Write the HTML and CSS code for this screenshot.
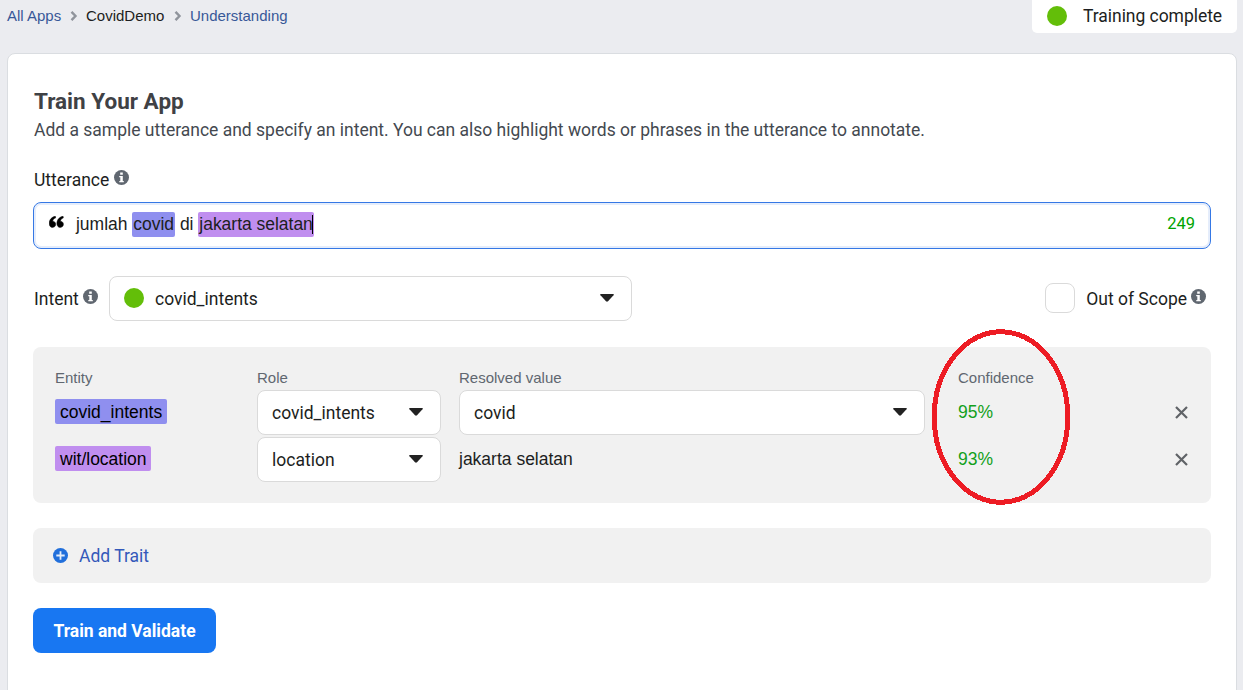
FILE: index.html
```html
<!DOCTYPE html>
<html lang="en">
<head>
<meta charset="utf-8">
<title>Understanding</title>
<link rel="stylesheet" href="styles.css">
</head>
<body>
<svg class="defs" width="0" height="0">
  <symbol id="info" viewBox="0 0 15 15"><circle cx="7.5" cy="7.5" r="7.5" fill="#606770"/><path d="M6.2 2.6h2.6v2.2H6.200zM5.200 6h3.600v5H9.800v1.200H5.300v-1.200h1V7.300H5.200z" fill="#fff"/></symbol>
  <symbol id="caret" viewBox="0 0 14 8"><path d="M.6 0h12.800q.8.5.1 1.300L8 7.300q-1 .9-2 0L.5 1.300Q-.2.5.6 0z" fill="#222"/></symbol>
  <symbol id="chevron" viewBox="0 0 8 10"><path d="M1.500 .8l4 4.200-4 4.200" fill="none" stroke="#90949c" stroke-width="2.400"/></symbol>
  <symbol id="close" viewBox="0 0 13 13"><path d="M1 1l11 11M12 1L1 12" fill="none" stroke="#606367" stroke-width="2.200"/></symbol>
</svg>
<header class="topbar">
  <nav class="crumbs">
    <a class="link c1">All Apps</a><svg class="chev"><use href="#chevron"/></svg><span class="c2">CovidDemo</span><svg class="chev"><use href="#chevron"/></svg><a class="link c3">Understanding</a>
  </nav>
  <div class="status"><i class="dot"></i><span class="status-text">Training complete</span></div>
</header>
<main class="card">
  <h1 class="title"><span>Train Your App</span></h1>
  <p class="intro"><span>Add a sample utterance and specify an intent. You can also highlight words or phrases in the utterance to annotate.</span></p>
  <div class="label utter-label"><span>Utterance</span><svg class="info"><use href="#info"/></svg></div>
  <div class="utterance">
    <svg class="quote" viewBox="0 0 15 12"><path d="M6.400.3C3 .8.200 3.500.200 7.500c0 2.400 1.300 3.900 3.300 3.900 1.900 0 3.200-1.300 3.200-3.100S5.400 5.200 3.700 5.200c0-1.600 1.100-2.700 2.900-3.300zM14.100.3C10.700.8 7.900 3.500 7.900 7.500c0 2.400 1.300 3.900 3.300 3.900 1.900 0 3.200-1.300 3.200-3.100s-1.300-3.100-3-3.100c0-1.600 1.100-2.700 2.900-3.300z" fill="#000" stroke="#000" stroke-width=".5"/></svg>
    <div class="sentence">jumlah <mark class="blue">covid</mark> di <mark class="purple">jakarta selatan<i class="cursor"></i></mark></div>
    <span class="count">249</span>
  </div>
  <div class="intent-row">
    <div class="label"><span>Intent</span><svg class="info"><use href="#info"/></svg></div>
    <div class="select intent"><i class="dot"></i><span>covid_intents</span><svg class="caret"><use href="#caret"/></svg></div>
    <div class="scope"><i class="checkbox"></i><span class="scope-text">Out of Scope</span><svg class="info"><use href="#info"/></svg></div>
  </div>
  <section class="entities">
    <div class="row head"><span>Entity</span><span>Role</span><span>Resolved value</span><span>Confidence</span></div>
    <div class="row">
      <div class="cell"><span class="tag blue">covid_intents</span></div>
      <div class="select"><span>covid_intents</span><svg class="caret"><use href="#caret"/></svg></div>
      <div class="select value"><span>covid</span><svg class="caret"><use href="#caret"/></svg></div>
      <span class="percent">95%</span>
      <svg class="close"><use href="#close"/></svg>
    </div>
    <div class="row">
      <div class="cell"><span class="tag purple">wit/location</span></div>
      <div class="select"><span>location</span><svg class="caret"><use href="#caret"/></svg></div>
      <span class="plain">jakarta selatan</span>
      <span class="percent">93%</span>
      <svg class="close"><use href="#close"/></svg>
    </div>
    <svg class="ring" viewBox="0 0 140 176"><ellipse cx="70" cy="88" rx="66.800" ry="85.300" fill="none" stroke="#ed1c24" stroke-width="5" shape-rendering="crispEdges"/></svg>
  </section>
  <section class="trait">
    <svg class="plus" viewBox="0 0 15 15"><circle cx="7.500" cy="7.500" r="7.500" fill="#216fdb"/><path d="M7.500 3.300v8.400M3.300 7.500h8.400" stroke="#e3edfa" stroke-width="1.800"/></svg><span>Add Trait</span>
  </section>
  <button class="primary"><span>Train and Validate</span></button>
</main>
</body>
</html>
```

FILE: styles.css
```css
* { box-sizing: border-box; }
body { margin: 0; height: 690px; overflow: hidden; background: #ebecf0; color: #1c1e21; font: 17.5px/24px Roboto, sans-serif; }
.defs { position: absolute; }
svg { flex: none; display: block; }
.topbar { height: 53px; padding: 0 6px 0 7px; display: flex; justify-content: space-between; align-items: flex-start; }
.crumbs { display: flex; align-items: center; height: 32px; font: 15px/20px "Liberation Sans", Arial, sans-serif; white-space: nowrap; }
.link { color: #385898; }
.c1 { width: 54px; }
.c2 { width: 79px; color: #1c1e21; }
.chev { width: 8px; height: 10px; margin: 0 8px 0 9px; }
.status { width: 205px; height: 33px; padding-left: 15px; display: flex; align-items: center; gap: 16px; background: #fff; border-radius: 0 0 5px 5px; }
.status .dot { margin-top: -1px; }
.status-text { margin-top: -2px; letter-spacing: -.04px; }
.dot { flex: none; width: 20px; height: 20px; border-radius: 50%; background: #63be09; }
.card { width: 1230px; height: 650px; margin-left: 7px; padding: 33px 25px 0; background: #fff; border: 1px solid #dadde1; border-radius: 8px; }
.title { margin: 0; padding-left: 1px; font-size: 22.5px; line-height: 28px; font-weight: 700; color: #3f4145; }
.intro { margin: 0; padding: 1px 0 0 1px; line-height: 28px; letter-spacing: -.008px; color: #444950; white-space: nowrap; }
.label { display: flex; gap: 6px; }
.label span { padding-left: 1px; }
.info { width: 15px; height: 15px; margin-top: 2px; }
.utter-label { height: 34px; margin-top: 24px; gap: 5px; }
.utterance { height: 47px; padding: 0 15px; display: flex; align-items: center; border: 1px solid #3578e5; border-radius: 8px; box-shadow: inset 0 0 0 2px #e5edfb; }
.quote { width: 15px; height: 12px; margin-top: -7px; }
.sentence { margin: -3px auto 0 12px; font: 17.5px/25px "Liberation Sans", Arial, sans-serif; letter-spacing: -.02px; white-space: pre; }
mark { display: inline-block; height: 25px; padding: 0 1px; color: inherit; border-radius: 2px; position: relative; }
.blue { background: #8f8fef; }
.purple { background: #c08eef; }
.cursor { position: absolute; right: 1px; top: 3px; width: 1px; height: 19px; background: #000; }
.count { color: #00a400; font-size: 16.5px; margin-top: -3px; }
.intent-row { height: 45px; margin-top: 27px; display: flex; align-items: center; }
.intent-row .label { width: 76px; gap: 4px; }
.intent-row .info { margin-top: 2px; }
.select { height: 45px; padding: 0 17px 0 14px; display: flex; align-items: center; background: #fff; border: 1px solid #dadada; border-radius: 8px; }
.select .caret { width: 14px; height: 8px; margin-left: auto; margin-top: -1px; }
.intent { width: 523px; gap: 11px; }
.intent .dot { margin-top: -2px; }
.scope { margin-left: auto; padding-right: 5px; display: flex; align-items: center; }
.checkbox { width: 30px; height: 30px; border: 1px solid #dadada; border-radius: 8px; margin: -2px 11px 0 0; }
.scope .info { margin: -4px 0 0 4px; }
.entities { position: relative; height: 156px; margin-top: 26px; padding: 20px 22px 0; background: #f1f1f1; border-radius: 8px; display: flex; flex-direction: column; gap: 2px; }
.row { display: grid; grid-template-columns: 184px 184px 466px 205px 13px; column-gap: 18px; align-items: center; height: 45px; font-family: "Liberation Sans", Arial, sans-serif; }
.row .select { font-family: Roboto, sans-serif; }
.row.head { height: 21px; color: #606770; font-size: 15px; line-height: 21px; }
.head span:last-child, .percent { margin-left: 15px; }
.tag { display: inline-block; height: 25px; padding: 1px 5px 0; line-height: 24px; border-radius: 2px; color: #000; }
.row .tag.purple { padding-right: 4px; }
.cell { height: 25px; margin-top: -3px; }
.percent { color: #13a01c; margin-top: -1px; }
.plain { margin-top: -1px; }
.close { width: 13px; height: 13px; margin-left: 9px; }
.ring { position: absolute; left: 898px; top: -18px; width: 140px; height: 176px; }
.trait { height: 55px; margin-top: 25px; padding-left: 20px; display: flex; align-items: center; gap: 11px; background: #f1f1f1; border-radius: 8px; color: #3459ba; }
.plus { width: 15px; height: 15px; }
.primary { width: 183px; height: 45px; margin-top: 25px; padding: 0; border: 0; border-radius: 8px; background: #1877f2; color: #fff; font: 700 17.5px Roboto, sans-serif; display: block; }
```
